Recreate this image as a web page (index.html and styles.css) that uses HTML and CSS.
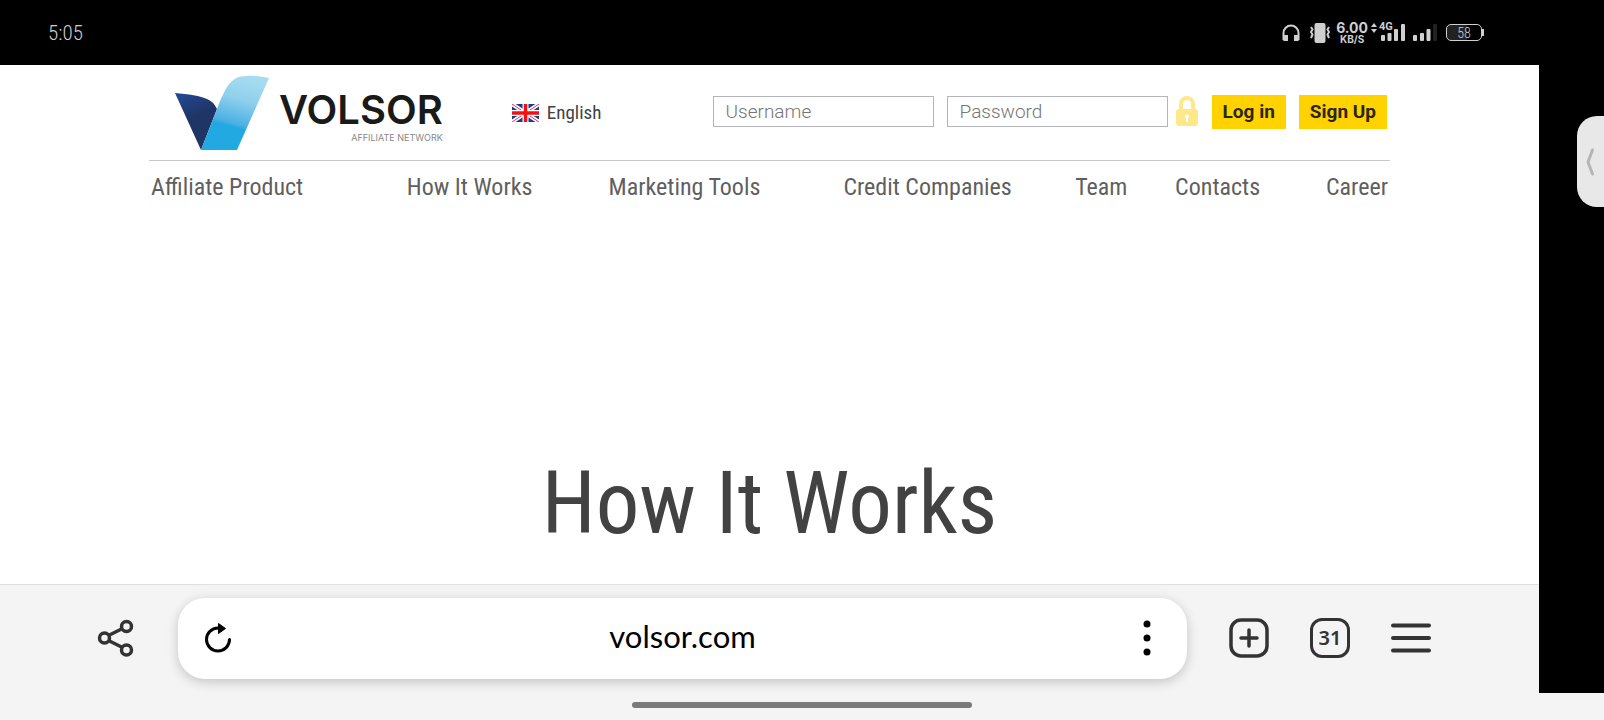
FILE: index.html
```html
<!DOCTYPE html>
<html lang="en">
<head>
    <meta charset="UTF-8">
    <meta name="viewport" content="width=device-width, initial-scale=1.0">
    <title>Volsor - How It Works</title>
    <link rel="stylesheet" href="styles.css">
</head>
<body>
    <div class="status-bar">
        <span class="time">5:05</span>
        <div class="status-icons">
            <svg class="headphones" width="18" height="18" viewBox="0 0 18 18">
                <path d="M1.5 16V9a7.5 7.5 0 0 1 15 0v7" fill="none" stroke="#cfcfcf" stroke-width="2"/>
                <path d="M1 11h5v6H2.500a1.500 1.500 0 0 1-1.500-1.500zM12 11h5v4.500a1.500 1.500 0 0 1-1.500 1.500H12z" fill="#cfcfcf"/>
            </svg>
            <svg class="vibrate" width="20" height="20" viewBox="0 0 20 20">
                <rect x="4.500" y="0" width="11" height="20" rx="2" fill="#cfcfcf"/>
                <path d="M1 4l1.500 2.500L1 9l1.500 2.500L1 15M19 4l-1.500 2.500L19 9l-1.500 2.500L19 15" fill="none" stroke="#cfcfcf" stroke-width="2"/>
            </svg>
            <div class="speed">
                <span class="speed-value">6.00</span>
                <span class="speed-unit">KB/S</span>
            </div>
            <div class="signal">
                <svg width="34" height="20" viewBox="0 0 34 20">
                    <path d="M0 4l3-4 3 4zM0 6h6l-3 4z" fill="#cfcfcf"/>
                    <g fill="#cfcfcf">
                        <rect x="10" y="12" width="4" height="6" rx="1"/>
                        <rect x="16.500" y="10" width="4" height="8" rx="1"/>
                        <rect x="23" y="6" width="4" height="12" rx="1"/>
                        <rect x="30" y="1" width="4" height="17" rx="1"/>
                    </g>
                </svg>
                <span class="network">4G</span>
            </div>
            <svg class="signal-two" width="24" height="20" viewBox="0 0 24 20" fill="#cfcfcf">
                <rect x="0" y="12" width="4" height="6" rx="1"/>
                <rect x="7" y="10" width="4" height="8" rx="1"/>
                <rect x="13.500" y="6" width="4" height="12" rx="1"/>
                <rect x="20" y="1" width="4" height="17" rx="1" fill="#222"/>
            </svg>
            <div class="battery"><span>58</span></div>
        </div>
    </div>

    <div class="screen">
        <div class="browser">
            <main class="page">
                <header class="header">
                    <a href="#" class="logo" aria-label="Volsor Affiliate Network">
                        <svg class="logo-mark" width="96" height="76" viewBox="0 0 96 76">
                            <defs>
                                <linearGradient id="dark" x1="0" y1="0" x2="0.3" y2="1">
                                    <stop offset="0" stop-color="#244a96"/>
                                    <stop offset="0.5" stop-color="#1f3566"/>
                                </linearGradient>
                                <linearGradient id="light" x1="0.6" y1="0" x2="0.35" y2="1">
                                    <stop offset="0" stop-color="#a6dcf1"/>
                                    <stop offset="0.3" stop-color="#8fd0ec"/>
                                    <stop offset="0.63" stop-color="#4bb0e4"/>
                                    <stop offset="0.68" stop-color="#23a9e1"/>
                                </linearGradient>
                            </defs>
                            <path d="M1 18C14 19 27 21 33 24Q39 26 43 34L27 75z" fill="url(#dark)"/>
                            <path d="M27 75L43 34C51 14 56 1 72 1C80 0 88 2 95 3L63 75z" fill="url(#light)"/>
                        </svg>
                        <span class="logo-text">
                            <span class="logo-name">VOLSOR</span>
                            <span class="logo-sub">AFFILIATE NETWORK</span>
                        </span>
                    </a>

                    <a href="#" class="language">
                        <svg width="27" height="18" viewBox="0 0 27 18">
                            <rect width="27" height="18" fill="#123e94"/>
                            <path d="M0 0L27 18M27 0L0 18" stroke="#fff" stroke-width="4"/>
                            <path d="M0 0L27 18M27 0L0 18" stroke="#ee3050" stroke-width="1"/>
                            <path d="M13.500 0V18M0 9H27" stroke="#fff" stroke-width="6"/>
                            <path d="M13.500 0V18M0 9H27" stroke="#f50f0f" stroke-width="3.500"/>
                        </svg>
                        English
                    </a>

                    <form class="login-form">
                        <input type="text" class="field" placeholder="Username" aria-label="Username">
                        <input type="password" class="field" placeholder="Password" aria-label="Password">
                        <svg class="lock" width="24" height="31" viewBox="0 0 24 31">
                            <path d="M6 15V8a6 6 0 0 1 12 0v7" fill="none" stroke="#ffe88a" stroke-width="4"/>
                            <rect x="1" y="13" width="22" height="17" rx="3" fill="#ffe88a"/>
                            <circle cx="12" cy="20.500" r="2" fill="#fff"/>
                            <path d="M11 21h2v5h-2z" fill="#fff"/>
                        </svg>
                        <button type="button" class="btn">Log in</button>
                        <button type="button" class="btn">Sign Up</button>
                    </form>
                </header>

                <nav class="menu">
                    <a href="#">Affiliate Product</a>
                    <a href="#">How It Works</a>
                    <a href="#">Marketing Tools</a>
                    <a href="#">Credit Companies</a>
                    <a href="#">Team</a>
                    <a href="#">Contacts</a>
                    <a href="#">Career</a>
                </nav>

                <h1 class="title">How It Works</h1>
            </main>

            <div class="toolbar">
                <button type="button" class="tool" aria-label="Share">
                    <svg width="40" height="40" viewBox="0 0 40 40" fill="none" stroke="#333" stroke-width="3.500">
                        <circle cx="8.500" cy="20" r="5"/>
                        <circle cx="30.500" cy="8.500" r="5"/>
                        <circle cx="30.500" cy="32" r="5"/>
                        <path d="M12.500 17.500L26.500 10.500M12.500 22.500L26.500 29.500"/>
                    </svg>
                </button>
                <div class="address">
                    <button type="button" class="tool" aria-label="Reload">
                        <svg width="30" height="32" viewBox="0 0 30 32">
                            <path d="M26.500 17.500A11.500 11.500 0 1 1 15 6" fill="none" stroke="#000" stroke-width="3" stroke-linecap="round"/>
                            <path d="M15.500 1.500L22.500 6.500L15.500 11.500z" fill="#000" stroke="#000" stroke-linejoin="round"/>
                        </svg>
                    </button>
                    <span class="url">volsor.com</span>
                    <button type="button" class="tool" aria-label="More">
                        <svg width="30" height="36" viewBox="0 0 30 36">
                            <circle cx="15" cy="4" r="3.500"/>
                            <circle cx="15" cy="18" r="3.500"/>
                            <circle cx="15" cy="32" r="3.500"/>
                        </svg>
                    </button>
                </div>
                <div class="tool-group">
                    <button type="button" class="tool" aria-label="New tab">
                        <svg width="40" height="40" viewBox="0 0 40 40" fill="none" stroke="#333" stroke-width="3.500" stroke-linecap="round">
                            <rect x="2" y="2" width="36" height="36" rx="10"/>
                            <path d="M20 12V28M12 20H28"/>
                        </svg>
                    </button>
                    <button type="button" class="tool tabs">31</button>
                    <button type="button" class="tool" aria-label="Menu">
                        <svg width="40" height="40" viewBox="0 0 40 40" stroke="#333" stroke-width="4" stroke-linecap="round">
                            <path d="M2 7.500H38M2 20H38M2 32.500H38"/>
                        </svg>
                    </button>
                </div>
            </div>
        </div>
        <button type="button" class="edge-handle" aria-label="Open side panel">
            <svg width="10" height="28" viewBox="0 0 10 28">
                <path d="M7.500 2L3 14L7.500 26" fill="none" stroke="#b5b5b5" stroke-width="3" stroke-linecap="round" stroke-linejoin="round"/>
            </svg>
        </button>
    </div>

    <div class="gesture-bar"><span></span></div>
</body>
</html>
```
FILE: styles.css
```css
* {
    box-sizing: border-box;
}

body {
    margin: 0;
    min-height: 100vh;
    display: flex;
    flex-direction: column;
    background-color: #f4f4f4;
    font-family: "Roboto Condensed", "Liberation Sans Narrow", Roboto, sans-serif;
}

a {
    color: inherit;
    text-decoration: none;
}

button {
    border: none;
    padding: 0;
    background: none;
    font-family: inherit;
    cursor: pointer;
}

svg {
    display: block;
    flex-shrink: 0;
}

/* status bar */
.status-bar {
    display: flex;
    align-items: center;
    justify-content: space-between;
    height: 65px;
    padding: 0 122px 0 48px;
    background-color: #000;
    color: #cfcfcf;
}

.time {
    font-size: 21px;
    font-weight: 300;
}

.status-icons {
    display: flex;
    align-items: center;
}

.vibrate {
    margin-left: 10px;
}

.speed {
    display: flex;
    flex-direction: column;
    align-items: center;
    margin-left: 6px;
    font-family: Inter, sans-serif;
    font-weight: 700;
}

.speed-value {
    font-size: 14px;
    line-height: 12px;
}

.speed-unit {
    font-size: 10px;
    line-height: 10px;
}

.signal {
    position: relative;
    margin-left: 3px;
}

.network {
    position: absolute;
    top: -2px;
    left: 8px;
    font-family: Roboto, sans-serif;
    font-size: 11px;
    font-weight: 700;
    line-height: 12px;
}

.signal-two {
    margin-left: 8px;
}

.battery {
    position: relative;
    width: 36px;
    height: 17px;
    margin-left: 9px;
    border: 1px solid #cfcfcf;
    border-radius: 5px;
    font-size: 14px;
    font-weight: 300;
    line-height: 16px;
    text-align: center;
    background: linear-gradient(90deg, #222 58%, #000 58%);
}

.battery::after {
    content: "";
    position: absolute;
    top: 4px;
    right: -3px;
    width: 2px;
    height: 7px;
    background-color: #cfcfcf;
}

/* web page */
.screen {
    position: relative;
    flex: 1;
    display: flex;
    padding-right: 65px;
    background-color: #000;
}

.browser {
    flex: 1;
    display: flex;
    flex-direction: column;
    background-color: #fff;
}

.page {
    flex: 1;
    width: 100%;
    max-width: 1241px;
    margin: 0 auto;
}

.header {
    display: flex;
    align-items: center;
    height: 96px;
    padding: 0 3px 0 25px;
    border-bottom: 1px solid #c8c8c8;
}

.logo {
    display: flex;
    align-items: center;
    gap: 9px;
}

.logo-text {
    display: flex;
    flex-direction: column;
    align-items: flex-end;
    padding-top: 6px;
    font-family: Inter, sans-serif;
}

.logo-name {
    color: #1a1a1a;
    font-size: 40px;
    font-weight: 600;
    line-height: 44px;
}

.logo-sub {
    color: #888;
    font-size: 9px;
    line-height: 12px;
}

.language {
    display: flex;
    align-items: center;
    gap: 8px;
    margin-left: 69px;
    color: #424242;
    font-size: 19px;
}

.login-form {
    display: flex;
    align-items: center;
    margin: 0 0 2px auto;
}

.field {
    width: 221px;
    height: 31px;
    margin-right: 13px;
    padding: 0 12px;
    border: 1px solid #b4b4bc;
    font-family: Roboto, sans-serif;
    font-size: 19px;
    font-weight: 300;
}

.field::placeholder {
    color: #757575;
}

.field + .field {
    margin-right: 7px;
}

.btn {
    height: 34px;
    margin-left: 13px;
    padding: 0 11px;
    background-color: #ffd200;
    color: #2b2611;
    font-family: Roboto, sans-serif;
    font-size: 19px;
    font-weight: 700;
}

.menu {
    display: grid;
    grid-template-columns: 256fr 202fr 235fr 232fr 100fr 151fr 61fr;
    padding: 0 2px;
    color: #5f5f5f;
    font-size: 24px;
    line-height: 52px;
    white-space: nowrap;
}

.title {
    margin: 238px 0 0;
    color: #424242;
    font-size: 87px;
    font-weight: 400;
    line-height: 104px;
    text-align: center;
}

/* browser toolbar */
.toolbar {
    display: flex;
    align-items: center;
    height: 109px;
    padding: 0 108px 2px 96px;
    border-top: 1px solid #e0e0e0;
    background-color: #f4f4f4;
}

.address {
    flex: 1;
    display: flex;
    align-items: center;
    justify-content: space-between;
    height: 81px;
    margin: 0 42px;
    padding: 0 25px;
    border-radius: 27px;
    background-color: #fff;
    box-shadow: 0 3px 12px rgba(0, 0, 0, 0.2);
}

.url {
    padding-bottom: 4px;
    color: #000;
    font-family: Lato, sans-serif;
    font-size: 31px;
}

.tool-group {
    display: flex;
    gap: 41px;
}

.tabs {
    width: 40px;
    height: 40px;
    border: 3px solid #333;
    border-radius: 12px;
    color: #333;
    font-family: "Noto Sans", sans-serif;
    font-size: 20px;
    font-weight: 600;
    line-height: 34px;
}

/* side panel tab on the right edge */
.edge-handle {
    position: absolute;
    top: 51px;
    right: 0;
    width: 27px;
    height: 91px;
    padding-left: 8px;
    border-radius: 20px 0 0 20px;
    background-color: #e8e8e8;
}

.gesture-bar {
    display: flex;
    justify-content: center;
    height: 27px;
    padding-top: 9px;
}

.gesture-bar span {
    width: 340px;
    height: 6px;
    border-radius: 3px;
    background-color: #7a7a7a;
}
```
